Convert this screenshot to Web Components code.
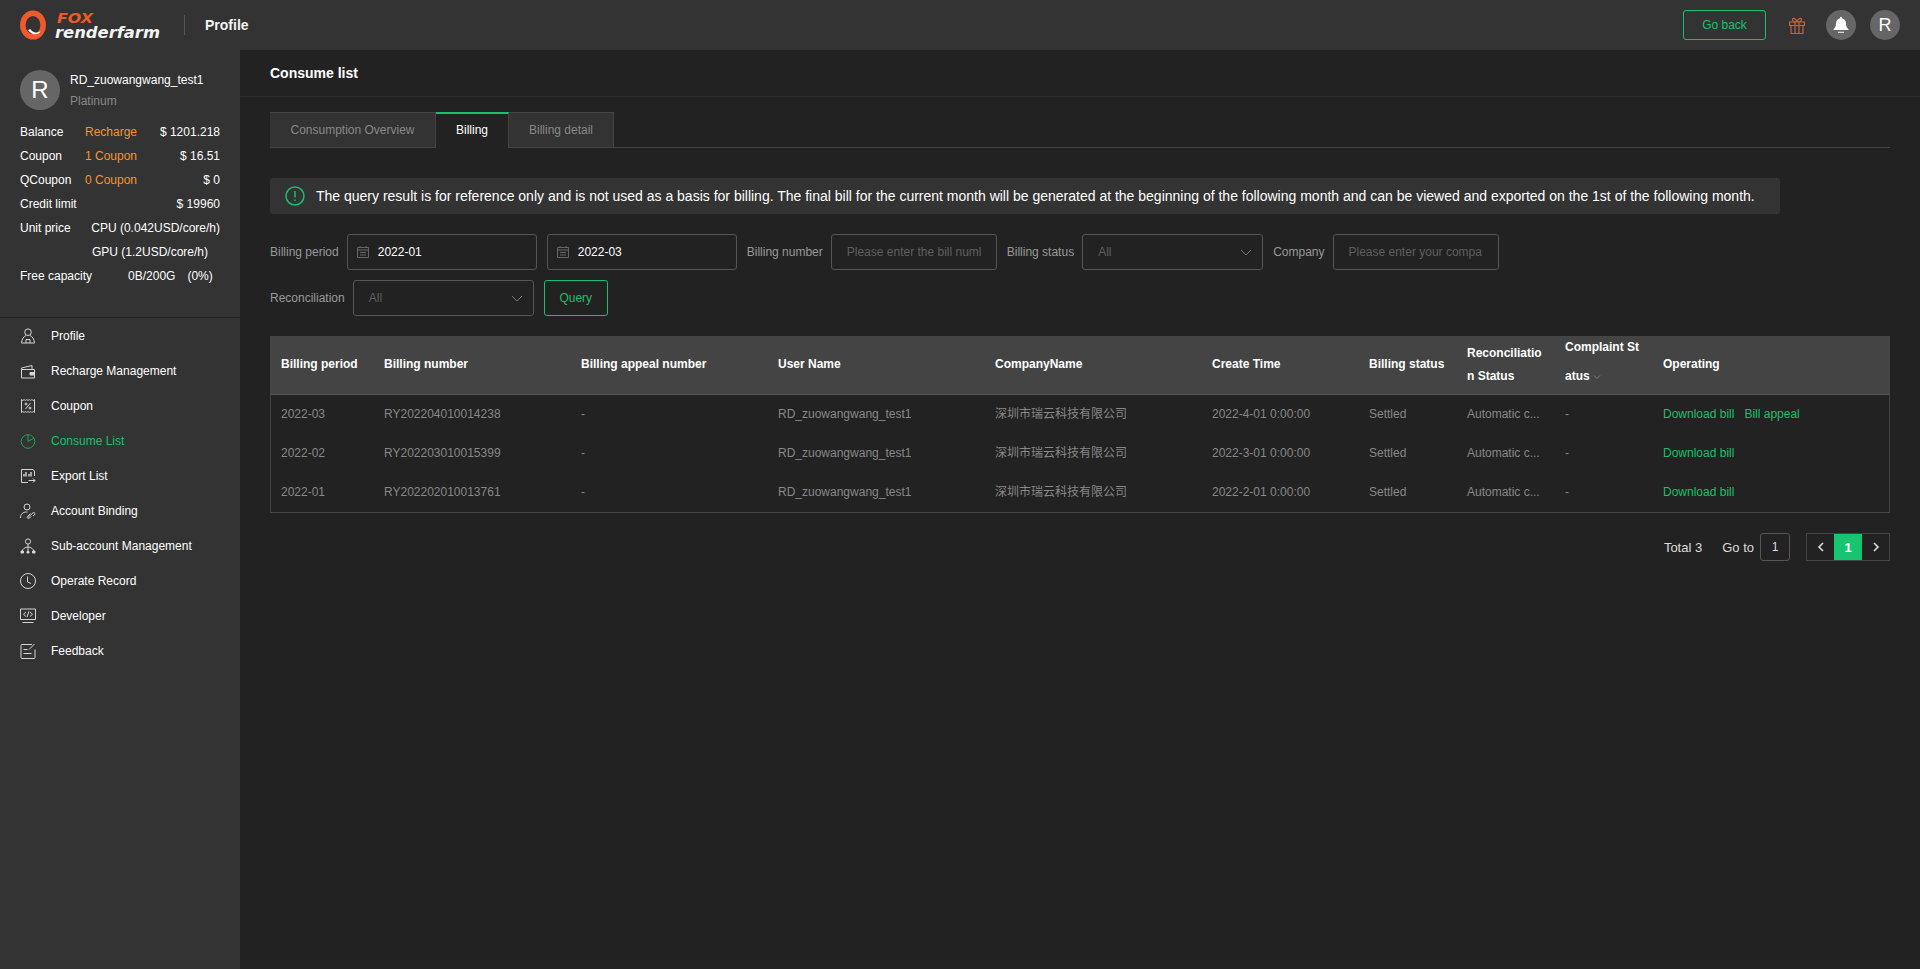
<!DOCTYPE html>
<html>
<head>
<meta charset="utf-8">
<style>
  html, body { margin: 0; height: 100%; background: #222222; overflow: hidden; }
  body { font-family: "Liberation Sans", "Noto Sans CJK SC", sans-serif; font-size: 12px; }
</style>
</head>
<body>
<app-shell>
  <top-bar slot="top"></top-bar>
  <side-bar slot="side"></side-bar>
  <consume-page slot="main"></consume-page>
</app-shell>

<script>
const green = '#17c06c';

class AppShell extends HTMLElement {
  constructor() {
    super();
    this.attachShadow({mode: 'open'}).innerHTML = `
    <style>
      :host { display: grid; grid-template-columns: 240px 1fr; grid-template-rows: 50px 1fr; height: 969px; overflow: hidden; background: #222; }
      .top { grid-column: 1 / 3; }
    </style>
    <div class="top"><slot name="top"></slot></div>
    <slot name="side"></slot>
    <slot name="main"></slot>`;
  }
}

class TopBar extends HTMLElement {
  constructor() {
    super();
    this.attachShadow({mode: 'open'}).innerHTML = `
    <style>
      :host { display: flex; align-items: center; height: 50px; background: #333; padding: 0 20px; box-sizing: border-box; color: #fff; }
      .logo { display: block; width: 142px; height: 50px; }
      .logo text { font-family: "DejaVu Sans", sans-serif; font-weight: bold; font-style: italic; }
      .sep { width: 1px; height: 20px; background: #555; margin: 0 20px 0 22px; }
      .title { font-size: 14px; font-weight: bold; color: #f2f2f2; }
      .grow { flex: 1; }
      .back { box-sizing: border-box; width: 83px; height: 30px; border: 1px solid ${green}; border-radius: 3px; color: ${green}; display: flex; align-items: center; justify-content: center; margin-right: 23px; }
      .gift { width: 16px; height: 17px; margin-right: 21px; }
      .round { width: 30px; height: 30px; border-radius: 50%; background: #666; display: flex; align-items: center; justify-content: center; font-size: 18px; }
      .round + .round { margin-left: 14px; }
    </style>
    <svg class="logo" viewBox="0 0 142 50">
      <ellipse cx="13" cy="25" rx="10.200" ry="11.800" fill="none" stroke="#ee5a2c" stroke-width="5.500"/>
      <path d="M8 30c2 3 5 5 9 4 2-.5 3-1.500 3.500-3-2 1.500-4.500 2-6.500 1-2-.8-3-1.700-3.500-3-.8.5-1.700.8-2.500 1z" fill="#fff"/>
      <text x="37" y="22.500" font-size="13.500" fill="#ee5a2c" textLength="36" lengthAdjust="spacingAndGlyphs">FOX</text>
      <text x="35" y="38" font-size="15" fill="#f4f4f4" textLength="105" lengthAdjust="spacingAndGlyphs">renderfarm</text>
    </svg>
    <div class="sep"></div>
    <div class="title">Profile</div>
    <div class="grow"></div>
    <div class="back">Go back</div>
    <svg class="gift" viewBox="0 0 16 17" fill="none" stroke="#c8623a" stroke-width="1.200">
      <path d="M.6 5h14.800v3.500H.6zM2 8.500v8h12v-8M6 5v11.500M10 5v11.500M8 5C5.500 5 3.500 4 3.500 2.500 3.500 1 6.500.2 8 5zM8 5c2.500 0 4.500-1 4.500-2.500C12.500 1 9.500.2 8 5z"/>
    </svg>
    <div class="round">
      <svg width="18" height="18" viewBox="0 0 18 18" fill="#fff"><path d="M9 1c.6 0 1 .4 1 1v.3c2.500.5 4 2.700 4 5.200 0 3 1 4.500 2.500 5.700v.8h-15v-.8C3 12 4 10.500 4 7.500c0-2.500 1.500-4.700 4-5.200V2c0-.6.400-1 1-1zM6 15.700h6v1H6z"/></svg>
    </div>
    <div class="round">R</div>`;
  }
}

class UserCard extends HTMLElement {
  constructor() {
    super();
    this.attachShadow({mode: 'open'}).innerHTML = `
    <style>
      :host { display: block; padding: 20px 20px 0; color: #fff; height: 268px; box-sizing: border-box; border-bottom: 1px solid #222; }
      .head { display: flex; gap: 10px; margin-bottom: 9px; }
      .avatar { width: 40px; height: 40px; border-radius: 50%; background: #666; font-size: 24px; display: flex; align-items: center; justify-content: center; }
      .name { line-height: 20px; }
      .level { line-height: 20px; color: #888; margin-top: 1px; }
      .row { display: flex; height: 24px; align-items: center; width: 200px; white-space: nowrap; }
      .k { width: 65px; }
      .o { color: #f29530; }
      .v { margin-left: auto; }
      .unit { margin-left: 7px; }
      .cap { margin-left: 36px; }
      .pct { margin-left: 12px; }
    </style>
    <div class="head">
      <div class="avatar">R</div>
      <div>
        <div class="name">RD_zuowangwang_test1</div>
        <div class="level">Platinum</div>
      </div>
    </div>
    <div class="row"><span class="k">Balance</span><span class="o">Recharge</span><span class="v">$ 1201.218</span></div>
    <div class="row"><span class="k">Coupon</span><span class="o">1 Coupon</span><span class="v">$ 16.51</span></div>
    <div class="row"><span class="k">QCoupon</span><span class="o">0 Coupon</span><span class="v">$ 0</span></div>
    <div class="row"><span>Credit limit</span><span class="v">$ 19960</span></div>
    <div class="row"><span class="k">Unit price</span><span class="unit">CPU (0.042USD/core/h)</span></div>
    <div class="row"><span class="k"></span><span class="unit">GPU (1.2USD/core/h)</span></div>
    <div class="row"><span>Free capacity</span><span class="cap">0B/200G</span><span class="pct">(0%)</span></div>`;
  }
}

class NavItem extends HTMLElement {
  constructor() {
    super();
    this.attachShadow({mode: 'open'}).innerHTML = `
    <style>
      :host { display: flex; align-items: center; height: 35px; padding-left: 20px; color: #fff; }
      :host([active]) { color: ${green}; }
      ::slotted(svg) { width: 16px; height: 16px; fill: none; stroke: currentColor; stroke-width: 1; margin-right: 15px; display: block; opacity: .8; }
    </style>
    <slot name="icon"></slot><slot></slot>`;
  }
}

class SideBar extends HTMLElement {
  constructor() {
    super();
    this.attachShadow({mode: 'open'}).innerHTML = `
    <style>
      :host { display: block; background: #333; height: 919px; }
      nav { display: block; }
    </style>
    <user-card></user-card>
    <nav><slot></slot></nav>`;
    const items = [
      ['Profile', '<circle cx="8" cy="4.200" r="3.300"/><path d="M6 7.500c-2.500 1-4 3.500-4.500 7.500h13c-.5-4-2-6.500-4.500-7.500M6 15v-3.500h4V15"/>'],
      ['Recharge Management', '<path d="M1.500 6.500h13v8.500h-13zM1.500 6.500v-1.500L12 2.500v4"/><path d="M10 9.500h4.500v2.500H10z" fill="currentColor"/>'],
      ['Coupon', '<path d="M1.500 1.500c1 1.200 2 1.200 2.600 0 .7 1.200 1.800 1.200 2.600 0 .6 1.200 1.900 1.200 2.600 0 .7 1.200 1.800 1.200 2.600 0 .7 1.200 1.800 1.200 2.600 0v13c-.8-1.200-1.900-1.200-2.600 0-.8-1.200-1.900-1.200-2.600 0-.7-1.200-2-1.200-2.600 0-.8-1.200-1.900-1.200-2.600 0-.6-1.200-1.600-1.200-2.600 0zM5.500 11l5-6"/><circle cx="6" cy="6" r="1"/><circle cx="10" cy="10" r="1"/>'],
      ['Consume List', '<circle cx="8" cy="8.500" r="6.800"/><path d="M8 1.700v6.800l5.900-3.400"/>'],
      ['Export List', '<path d="M14.500 8V4c0-1.500-1-2.500-2.500-2.500H1.500v13H8M8.500 12.500h6.500M13 10.500l2 2-2 2"/><path d="M4 8.500V6M6 8.500V4M9 8.500V6M11 8.500V4" stroke-width="1.400"/>'],
      ['Account Binding', '<circle cx="7" cy="4" r="3"/><path d="M.5 15c0-4 2.500-6 6-6h1M8 14.500l5-4.700c1.200-1 2.800.7 1.500 2L13 13M10.500 10.500l-3 3c-1 1.300.5 2.500 2 1.500l1.500-1.500"/>'],
      ['Sub-account Management', '<circle cx="8" cy="3.500" r="2.600"/><path d="M8 6.100V14M8 9C5 9 2.500 11 2 13.500M8 9c3 0 5.500 2 6 4.500"/><path d="M1 13h2.500v2H1zM12.500 13H15v2h-2.500zM7 13.500h2V15H7z" fill="currentColor"/>'],
      ['Operate Record', '<circle cx="8" cy="8" r="7.500"/><path d="M7.500 3.500V9l3.500 1.500"/>'],
      ['Developer', '<path d="M.5 1h15v10.500H.5zM2.500 14.500h11M6 4l-2.500 2.300L6 8.500M10 4l2.500 2.300L10 8.500M9 3.300L7 9.200"/>'],
      ['Feedback', '<path d="M12 1.500H2a1 1 0 0 0-1 1v12a1 1 0 0 0 1 1h12a1 1 0 0 0 1-1V6.500M3.500 6.500h4M3.500 10.500h8M9 6.500L14.500 1"/>'],
    ];
    this.innerHTML = items.map(([label, icon]) => `<nav-item${label == 'Consume List' ? ' active' : ''}><svg slot="icon" viewBox="0 0 16 16">${icon}</svg>${label}</nav-item>`).join('');
  }
}

class TabStrip extends HTMLElement {
  constructor() {
    super();
    this.attachShadow({mode: 'open'}).innerHTML = `
    <style>
      :host { display: flex; height: 36px; box-sizing: border-box; border-bottom: 1px solid #444; }
      div { box-sizing: border-box; height: 36px; line-height: 35px; text-align: center; background: #333; color: #888; border: 1px solid #444; border-left: 0; }
      div:first-child { border-left: 1px solid #444; }
      .on { background: #222; color: #fff; border-top: 2px solid ${green}; border-bottom: 0; border-left: 0; border-right: 1px solid #444; line-height: 33px; }
    </style>
    <div style="width:166px">Consumption Overview</div><div class="on" style="width:73px">Billing</div><div style="width:105px">Billing detail</div>`;
  }
}

class FieldBox extends HTMLElement {
  constructor() {
    super();
    const w = this.getAttribute('width');
    const kind = this.getAttribute('kind');
    const text = this.getAttribute('text');
    let inner = '';
    if (kind == 'date') {
      inner = `<svg width="14" height="14" viewBox="0 0 14 14" fill="none" stroke="#666"><path d="M1.500 2.500h11v10h-11zM1.500 5h11M4 1v2M10 1v2M4 7.500h6M4 10h6"/></svg><span class="val">${text}</span>`;
    } else if (kind == 'select') {
      inner = `<span class="ph">${text}</span><svg class="arrow" width="12" height="12" viewBox="0 0 12 12" fill="none" stroke="#777"><path d="M1 4l5 5 5-5"/></svg>`;
    } else {
      inner = `<span class="ph clip">${text}</span>`;
    }
    this.attachShadow({mode: 'open'}).innerHTML = `
    <style>
      :host { display: flex; align-items: center; box-sizing: border-box; width: ${w}px; height: 36px; border: 1px solid #555; border-radius: 3px; white-space: nowrap; overflow: hidden; }
      :host([kind=date]) { padding-left: 8px; }
      :host([kind=select]), :host([kind=text]) { padding: 0 15px; }
      .val { color: #fff; margin-left: 8px; }
      .ph { color: #5f5f5f; }
      .clip { overflow: hidden; display: block; }
      .arrow { margin-left: auto; margin-right: -5px; }
    </style>${inner}`;
  }
}

class FilterBar extends HTMLElement {
  constructor() {
    super();
    this.attachShadow({mode: 'open'}).innerHTML = `
    <style>
      :host { display: block; color: #999; }
      .line { display: flex; align-items: center; height: 36px; white-space: nowrap; }
      .line + .line { margin-top: 10px; }
      .lab { margin-right: 8px; }
      .q { box-sizing: border-box; width: 64px; height: 36px; border: 1px solid ${green}; border-radius: 3px; color: ${green}; display: flex; align-items: center; justify-content: center; margin-left: 10px; }
      field-box + field-box { margin-left: 10px; }
      field-box + .lab { margin-left: 10px; }
    </style>
    <div class="line">
      <span class="lab">Billing period</span>
      <field-box kind="date" width="190" text="2022-01"></field-box>
      <field-box kind="date" width="190" text="2022-03"></field-box>
      <span class="lab">Billing number</span>
      <field-box kind="text" width="166" text="Please enter the bill numl"></field-box>
      <span class="lab">Billing status</span>
      <field-box kind="select" width="181" text="All"></field-box>
      <span class="lab">Company</span>
      <field-box kind="text" width="166" text="Please enter your compa"></field-box>
    </div>
    <div class="line">
      <span class="lab">Reconciliation</span>
      <field-box kind="select" width="181" text="All"></field-box>
      <div class="q">Query</div>
    </div>`;
  }
}

class BillTable extends HTMLElement {
  constructor() {
    super();
    const rows = [
      ['2022-03', 'RY202204010014238', '2022-4-01 0:00:00', true],
      ['2022-02', 'RY202203010015399', '2022-3-01 0:00:00', false],
      ['2022-01', 'RY202202010013761', '2022-2-01 0:00:00', false],
    ];
    const body = rows.map(([p, n, t, appeal]) => `<tr>
      <td>${p}</td><td>${n}</td><td>-</td><td>RD_zuowangwang_test1</td><td class="cn">深圳市瑞云科技有限公司</td><td>${t}</td><td>Settled</td><td>Automatic c...</td><td>-</td>
      <td class="ops"><span>Download bill</span>${appeal ? '<span>Bill appeal</span>' : ''}</td>
    </tr>`).join('');
    this.attachShadow({mode: 'open'}).innerHTML = `
    <style>
      :host { display: block; box-sizing: border-box; border: 1px solid #444; border-top: 0; height: 177px; }
      table { width: 100%; border-collapse: collapse; table-layout: fixed; }
      th { height: 58px; background: #444; color: #fff; text-align: left; padding: 0 10px; line-height: 29px; font-size: 12px; border-bottom: 1px solid #555; word-break: break-all; box-sizing: border-box; }
      th.recon { line-height: 23px; }
      th div { margin-top: -6px; }
      td { height: 39px; color: #888; padding: 0 10px; white-space: nowrap; box-sizing: border-box; }
      td.cn { padding-bottom: 2px; }
      .ops span { color: ${green}; margin-right: 10px; }
      svg { vertical-align: middle; margin-left: 3px; }
    </style>
    <table>
      <colgroup>
        <col style="width:103px"><col style="width:197px"><col style="width:197px"><col style="width:217px"><col style="width:217px"><col style="width:157px"><col style="width:98px"><col style="width:98px"><col style="width:98px"><col>
      </colgroup>
      <thead><tr>
        <th>Billing period</th><th>Billing number</th><th>Billing appeal number</th><th>User Name</th><th>CompanyName</th><th>Create Time</th><th>Billing status</th>
        <th class="recon">Reconciliation Status</th>
        <th><div>Complaint Status<svg width="8" height="8" viewBox="0 0 8 8" fill="none" stroke="#888" stroke-width=".8"><path d="M1 2.500l3 3 3-3"/></svg></div></th>
        <th>Operating</th>
      </tr></thead>
      <tbody>${body}</tbody>
    </table>`;
  }
}

class PagerBar extends HTMLElement {
  constructor() {
    super();
    this.attachShadow({mode: 'open'}).innerHTML = `
    <style>
      :host { display: flex; justify-content: flex-end; align-items: center; height: 28px; color: #ddd; font-size: 13px; }
      .go { margin-left: 20px; }
      .in { box-sizing: border-box; width: 30px; height: 28px; border: 1px solid #555; border-radius: 3px; margin-left: 6px; display: flex; align-items: center; justify-content: center; color: #ddd; font-size: 12px; }
      .pg { display: flex; margin-left: 16px; height: 28px; border: 1px solid #444; box-sizing: border-box; }
      .pg div { width: 27px; display: flex; align-items: center; justify-content: center; }
      .pg .cur { width: 28px; background: #17c46f; color: #fff; font-weight: bold; }
    </style>
    <span>Total 3</span>
    <span class="go">Go to</span>
    <div class="in">1</div>
    <div class="pg">
      <div><svg width="10" height="10" viewBox="0 0 10 10" fill="none" stroke="#ddd" stroke-width="1.600"><path d="M7 1L3 5l4 4"/></svg></div>
      <div class="cur">1</div>
      <div><svg width="10" height="10" viewBox="0 0 10 10" fill="none" stroke="#ddd" stroke-width="1.600"><path d="M3 1l4 4-4 4"/></svg></div>
    </div>`;
  }
}

class ConsumePage extends HTMLElement {
  constructor() {
    super();
    this.attachShadow({mode: 'open'}).innerHTML = `
    <style>
      :host { display: block; color: #fff; background: #222; }
      .title { height: 46px; line-height: 46px; padding-left: 30px; font-size: 14px; font-weight: bold; border-bottom: 1px solid #2e2e2e; }
      .body { padding: 15px 30px 0; }
      .note { display: flex; align-items: center; height: 36px; width: 1510px; margin-top: 30px; background: #333; border-radius: 3px; font-size: 14px; padding-left: 15px; box-sizing: border-box; white-space: nowrap; }
      .note svg { margin-right: 11px; }
      filter-bar { margin-top: 20px; }
      bill-table { margin-top: 20px; }
      pager-bar { margin-top: 20px; }
    </style>
    <div class="title">Consume list</div>
    <div class="body">
      <tab-strip></tab-strip>
      <div class="note">
        <svg width="20" height="20" viewBox="0 0 20 20" fill="none" stroke="${green}" stroke-width="1.500"><circle cx="10" cy="10" r="9"/><path d="M10 5v6.500M10 13.500v1.500"/></svg>
        The query result is for reference only and is not used as a basis for billing. The final bill for the current month will be generated at the beginning of the following month and can be viewed and exported on the 1st of the following month.
      </div>
      <filter-bar></filter-bar>
      <bill-table></bill-table>
      <pager-bar></pager-bar>
    </div>`;
  }
}

customElements.define('app-shell', AppShell);
customElements.define('top-bar', TopBar);
customElements.define('user-card', UserCard);
customElements.define('nav-item', NavItem);
customElements.define('side-bar', SideBar);
customElements.define('tab-strip', TabStrip);
customElements.define('field-box', FieldBox);
customElements.define('filter-bar', FilterBar);
customElements.define('bill-table', BillTable);
customElements.define('pager-bar', PagerBar);
customElements.define('consume-page', ConsumePage);
</script>
</body>
</html>
